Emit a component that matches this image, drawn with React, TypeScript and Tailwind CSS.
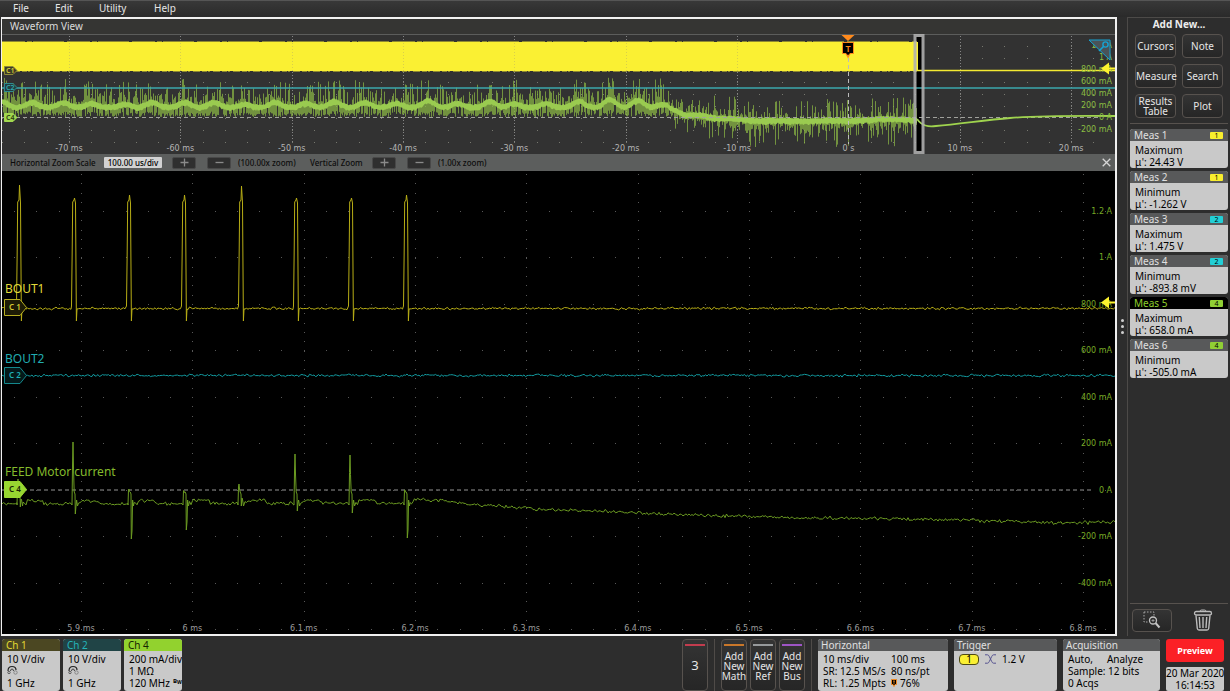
import React from 'react';
import clsx from 'clsx';

type Pt = [number, number];

// Small seeded generator so the traces look the same on every load
const makeRandom = (seed: number) => {
  let s = seed;
  return () => {
    s = (s * 16807) % 2147483647;
    return s / 2147483647;
  };
};

const lerp = (points: Pt[], x: number) => {
  for (let i = 1; i < points.length; i++) {
    const [x0, y0] = points[i - 1];
    const [x1, y1] = points[i];
    if (x <= x1) return y0 + ((y1 - y0) * (x - x0)) / (x1 - x0);
  }
  return points[points.length - 1][1];
};

const toPath = (points: Pt[]) => 'M' + points.map(([x, y]) => `${x.toFixed(1)} ${y.toFixed(1)}`).join('L');

const noisy = (from: number, to: number, amp: number, seed: number, base: (x: number) => number) => {
  const rand = makeRandom(seed);
  const points: Pt[] = [];
  for (let x = from; x <= to; x += 1.5) {
    points.push([x, base(x) + (rand() + rand() - 1) * amp]);
  }
  return points;
};

// Plot coordinate systems
const LEFT = 2;
const WIDTH = 1113;
const OVER = { top: 34, height: 120 };
const MAIN = { top: 171, height: 463 };
const DIV = 111.35;

const overviewTicks = ['-70 ms', '-60 ms', '-50 ms', '-40 ms', '-30 ms', '-20 ms', '-10 ms', '0 s', '10 ms', '20 ms'];
const mainTicks = ['5.9 ms', '6 ms', '6.1 ms', '6.2 ms', '6.3 ms', '6.4 ms', '6.5 ms', '6.6 ms', '6.7 ms', '6.8 ms'];
const overviewAmps = ['1.2 A', '1 A', '800 mA', '600 mA', '400 mA', '200 mA', '0 A', '-200 mA'];
const mainAmps = ['1.2 A', '1 A', '800 mA', '600 mA', '400 mA', '200 mA', '0 A', '-200 mA', '-400 mA'];

const left = (x: number) => `${((x - LEFT) / WIDTH) * 100}%`;

// ---- grids ----
const overviewDots = (() => {
  let d = '';
  for (let y = 45.5; y < 155; y += 12) {
    for (let i = -3; i < 48; i++) d += `M${Math.round(69 + i * (DIV / 5))} ${Math.round(y)}h1`;
  }
  return d;
})();

const mainDots = (() => {
  let d = '';
  for (let k = 0; k < 10; k++) {
    for (let i = -3; i < 47; i++) d += `M${Math.round(81 + i * (DIV / 5))} ${Math.round(211 + k * 46.45)}h1`;
    for (let j = 0; j < 50; j++) d += `M${Math.round(81 + k * DIV)} ${Math.round(174 + j * 9.29)}h1`;
  }
  return d;
})();

// ---- overview traces ----
const ripplePeaks = [2, 32, 63, 92, 125, 152, 185, 214, 245, 275, 306, 334, 365, 396, 428, 457, 490, 514, 546, 579, 610, 638, 662];
const rippleHeights = [6, 5, 5, 4, 3, 5, 5, 5, 3, 5, 4, 6, 5, 4, 7, 4, 6, 4, 4, 6, 8, 7, 3];
const envelope: Pt[] = [[664, 106], [674, 110], [684, 115], [700, 115], [716, 119], [740, 119], [760, 121], [848, 121], [880, 119], [917, 120]];

const ripple = (x: number) => {
  if (x > 668) return lerp(envelope, x) + Math.sin(x / 9) * 0.4;
  let lift = 0;
  ripplePeaks.forEach((p, i) => { lift = Math.max(lift, rippleHeights[i] * Math.exp(-((p - x) ** 2) / 65)); });
  return 107.5 - lift;
};

const currentBand = (() => {
  const rand = makeRandom(77);
  const upper: Pt[] = [];
  const lower: Pt[] = [];
  for (let x = 2; x <= 917; x += 1) {
    upper.push([x, ripple(x) - 2 - rand() * 1.5]);
    lower.push([x, ripple(x) + 2 + rand() * 2]);
  }
  return toPath([...upper, ...lower.reverse()]) + 'Z';
})();

const currentSpikes = (() => {
  const rand = makeRandom(4242);
  let d = '';
  for (let x = 3; x < 917; x += 1) {
    const r = rand();
    const r2 = rand();
    const mid = ripple(x);
    const quiet = x > 672;
    const calm = x > 672 && x < 712;
    if (r > 0.3) {
      const up = quiet ? 3 + r2 * r2 * (calm ? 14 : 20) : 5 + r2 * r2 * 19;
      const peak = !quiet && rand() > 0.9 ? 4 : 0;
      d += `M${x + 0.5} ${mid.toFixed(1)}V${(mid - up - peak).toFixed(1)}`;
    }
    if (r < 0.8) {
      const down = quiet ? 4 + rand() * rand() * (x < 700 ? 18 : 27) : (117 - mid) * (0.6 + rand() * 0.4);
      d += `M${x + 0.5} ${mid.toFixed(1)}V${Math.min(147, mid + down).toFixed(1)}`;
    }
  }
  return d;
})();

// ---- zoomed traces ----
const pulses: Pt[] = [[19, 185], [74, 198], [129, 195], [184, 195], [241, 186], [296, 198], [351, 198], [406, 195]];

const bout1 = (() => {
  const base = noisy(2, 1116, 1.5, 11, () => 308.5).filter(([x]) => !pulses.some(([p]) => x > p - 3 && x < p + 4));
  pulses.forEach(([x, top]) => {
    base.push([x - 2.5, 306], [x - 1.8, 250], [x - 1.3, 202], [x, 200], [x + 0.5, top], [x + 1.5, 203], [x + 1.9, 255], [x + 2.4, 321], [x + 3, 309]);
  });
  return toPath(base.sort((a, b) => a[0] - b[0]));
})();

const bout2 = toPath(noisy(2, 1116, 1.6, 29, () => 375.5));

const motorBase: Pt[] = [[2, 503], [415, 502], [440, 501], [480, 505], [520, 508], [560, 510], [600, 511], [640, 513], [720, 516], [820, 518], [900, 519], [1000, 521], [1050, 523], [1116, 522]];
const motorKicks: [number, number, number][] = [
  [18, 479, 507], [73, 442, 514], [129, 489, 539], [184, 491, 530], [239, 484, 506], [295, 454, 511], [350, 455, 513], [405, 490, 538],
];

const motor = (() => {
  const bump = (x: number) => {
    if (x > 430) return 0;
    return motorKicks.some(([k]) => x > k + 8 && x < k + 26) ? -2 : 1;
  };
  const base = noisy(2, 1116, 2.2, 53, x => lerp(motorBase, x) + bump(x))
    .filter(([x]) => !motorKicks.some(([k]) => x > k - 1 && x < k + 5));
  motorKicks.forEach(([x, up, down]) => {
    base.push([x - 1, 505], [x - 0.5, (up + 490) / 2], [x, up], [x + 0.5, (up + 494) / 2], [x + 1.2, 492], [x + 2, 494], [x + 2.3, down], [x + 3, down - 8], [x + 3.6, 500], [x + 4.5, 506]);
  });
  return toPath(base.sort((a, b) => a[0] - b[0]));
})();

const axisText = "absolute font-['DejaVu_Sans'] text-[8px] leading-[10px] whitespace-nowrap";

const ChannelTag: React.FC<{ y: number; name: string; stroke: string; fill: string; text: string; small?: boolean }> = ({ y, name, stroke, fill, text, small }) => (
  <svg
    className={clsx('absolute', small ? 'left-[2px] h-[9px] w-[14px]' : 'left-[2px] h-[17px] w-[24px]')}
    style={{ top: y }}
    viewBox={small ? '0 0 14 9' : '0 0 24 17'}
  >
    <path d={small ? 'M.5 .5H9L13 4.5L9 8.5H.5Z' : 'M.5 .5H16L22.5 8.5L16 16.5H.5Z'} fill={fill} stroke={stroke} />
    <text x={small ? 2 : 5} y={small ? 7 : 11} fill={text} fontFamily="Noto Sans" fontWeight="600" fontSize={small ? 7 : 8}>{name}</text>
  </svg>
);

const LevelArrow: React.FC<{ top: number }> = ({ top }) => (
  <svg className="absolute right-0 h-[13px] w-[14px]" style={{ top }} viewBox="0 0 14 13">
    <path d="M0 6.500L8 .5V12.500Z" fill="#fdf32e" />
    <path d="M7 6.500H14" stroke="#fdf32e" strokeWidth="2" />
  </svg>
);

const Overview = () => (
  <div className="relative h-[120px] shrink-0 overflow-hidden bg-[#323232]">
    {/* dark backing of the zoom window, under the traces */}
    <div className="absolute inset-y-0 w-[10px] -translate-x-1/2 bg-black" style={{ left: left(919) }} />
    <svg className="relative block h-full w-full" viewBox={`${LEFT} ${OVER.top} ${WIDTH} ${OVER.height}`} preserveAspectRatio="none">
      <path d="M2 34.500H1115" stroke="#5c5d5c" />
      <path d={overviewDots} stroke="#77786f" transform="translate(0 .5)" />
      {overviewTicks.map((t, i) => t !== '0 s' && (
        <path key={t} d={`M${Math.round(69 + i * DIV) + 0.5} 36V144`} stroke="#858585" strokeDasharray="1 2" />
      ))}
      <rect x="2" y="42" width="916" height="29" fill="#faf033" />
      <path d="M2 41.500H917" stroke="#8f8a32" strokeDasharray="23 2 5 1 31 3" />
      <path d="M2 71.500H917" stroke="#8f8a32" strokeDasharray="5 1 2 3 7 2" />
      {overviewTicks.slice(0, 7).map((t, i) => (
        <path key={t} d={`M${Math.round(69 + i * DIV) + 0.5} 43V71`} stroke="#d9cf4a" strokeDasharray="1 2" />
      ))}
      <path d="M917 70.500H1116" stroke="#f4ea32" strokeWidth="1.400" />
      <path d={currentSpikes} stroke="#8dbb45" strokeOpacity=".7" />
      <path d="M2 88H1116" stroke="#3ba9ae" strokeWidth="1.600" />
      <path d={currentBand} fill="#9acb50" />
      <path d="M848.500 58V144" stroke="#bbb" strokeDasharray="4 3" />
      <path d="M2 117.500H1098" stroke="#a0a19c" strokeDasharray="4 3" />
      <path d="M917 119C922 126 928 127 936 126C960 124 985 120 1010 118C1035 116 1060 115.500 1116 116" fill="none" stroke="#9fd34e" strokeWidth="1.800" />
    </svg>
    {overviewTicks.map((t, i) => (
      <span key={t} className={clsx(axisText, 'bottom-0 -translate-x-1/2 text-[#b4b4b4]')} style={{ left: left(69 + i * DIV) }}>{t}</span>
    ))}
    {overviewAmps.map((t, i) => (
      <span key={t} className={clsx(axisText, 'right-[3px] text-[#8bbd42]')} style={{ top: 7 + i * 12 }}>{t}</span>
    ))}
    <ChannelTag small y={32} name="C1" stroke="#8d8937" fill="#3d3c26" text="#d8cf3a" />
    <ChannelTag small y={49} name="C2" stroke="#2c8b90" fill="#233f41" text="#30aab0" />
    <ChannelTag small y={79} name="C4" stroke="#a2d84f" fill="#a2d84f" text="#2c3a14" />

    {/* trigger position */}
    <svg className="absolute top-px h-[25px] w-[14px] -translate-x-1/2" style={{ left: left(848) }} viewBox="0 0 14 25">
      <path d="M.5 0H13.500L7 6Z" fill="#ff8a1c" />
      <path d="M4.500 19H9.500L7 23.500Z" fill="#ff8a1c" />
      <path d="M1.500 7.500H12.500V18.500H9L7 21L5 18.500H1.500Z" fill="#000" stroke="#ff8a1c" />
      <text x="7" y="16.500" textAnchor="middle" fill="#ff8a1c" fontFamily="Noto Sans" fontWeight="600" fontSize="9">T</text>
    </svg>

    {/* zoom window */}
    <div className="absolute inset-y-0 w-[11px] -translate-x-1/2 border-[3px] border-[#b0b0b0]/90" style={{ left: left(919) }} />

    <svg className="absolute top-[5px] right-[4px] h-[22px] w-[23px]" viewBox="0 0 23 22">
      <path d="M1 1H22V21Z" fill="#4a5358" stroke="#15a4d4" />
      <circle cx="17.500" cy="5.500" r="2.600" fill="none" stroke="#15a4d4" strokeWidth="1.400" />
      <path d="M15.500 7.500L11 12" stroke="#15a4d4" strokeWidth="1.600" />
    </svg>
    <LevelArrow top={28} />
  </div>
);

const ZoomStep: React.FC<{ label: string; sign: '+' | '-' }> = ({ label, sign }) => (
  <button aria-label={label} className="flex h-[12px] w-[24px] items-center justify-center rounded-[2px] border border-[#484848] bg-[#2f2f2f]">
    <svg className="h-[9px] w-[9px]" viewBox="0 0 9 9">
      <path d={sign === '+' ? 'M.5 4.500H8.500M4.500 .5V8.500' : 'M.5 4.500H8.500'} stroke="#8a8a8a" strokeWidth="1.300" />
    </svg>
  </button>
);

const ZoomBar = () => (
  <div className="flex h-[17px] shrink-0 items-center bg-[#5c5e5d] pr-[3px] pl-2 text-[8px] leading-[12px] font-medium whitespace-nowrap text-[#0c0c0c]">
    <label htmlFor="hscale" className="w-[88px]">Horizontal Zoom Scale</label>
    <input id="hscale" defaultValue="100.00 us/div" className="ml-[6px] h-[11px] w-[58px] rounded-[1px] bg-[#d2d2d2] text-center text-black" />
    <div className="ml-[10px] flex gap-[11px]">
      <ZoomStep label="Increase horizontal zoom" sign="+" />
      <ZoomStep label="Decrease horizontal zoom" sign="-" />
    </div>
    <span className="ml-[7px] w-[72px]">(100.00x zoom)</span>
    <span className="w-[54px]">Vertical Zoom</span>
    <div className="ml-[8px] flex gap-[11px]">
      <ZoomStep label="Increase vertical zoom" sign="+" />
      <ZoomStep label="Decrease vertical zoom" sign="-" />
    </div>
    <span className="ml-[7px]">(1.00x zoom)</span>
    <button aria-label="Close zoom" className="ml-auto flex h-[12px] w-[12px] items-center justify-center">
      <svg className="h-[9px] w-[9px]" viewBox="0 0 9 9">
        <path d="M.7 .7L8.300 8.300M8.300 .7L.7 8.300" stroke="#d6d6d6" strokeWidth="1.300" />
      </svg>
    </button>
  </div>
);

const ZoomPlot = () => (
  <div className="relative min-h-[463px] flex-1 overflow-hidden bg-black">
    <svg className="absolute inset-0 h-full w-full" viewBox={`${LEFT} ${MAIN.top} ${WIDTH} ${MAIN.height}`} preserveAspectRatio="none">
      <path d={mainDots} stroke="#585858" transform="translate(0 .5)" />
      <path d="M2 490H1094" stroke="#636363" strokeWidth="1.400" strokeDasharray="4 3" />
      <path d={bout1} fill="none" stroke="#b8ae16" strokeLinejoin="round" />
      <path d={bout2} fill="none" stroke="#129a9f" />
      <path d={motor} fill="none" stroke="#6c9c22" />
    </svg>
    {mainTicks.map((t, i) => (
      <span key={t} className={clsx(axisText, 'bottom-0 -translate-x-1/2 text-[#9c9c9c]')} style={{ left: left(81 + i * DIV) }}>{t}</span>
    ))}
    {mainAmps.map((t, i) => (
      <span key={t} className={clsx(axisText, 'right-[3px] text-[#76a825]')} style={{ top: `${((36 + i * 46.45) / MAIN.height) * 100}%` }}>{t}</span>
    ))}
    <span className="absolute top-[110px] left-[3px] text-[12px] leading-[16px] text-[#e3da3a]">BOUT1</span>
    <span className="absolute top-[180px] left-[3px] text-[12px] leading-[16px] text-[#21acb1]">BOUT2</span>
    <span className="absolute top-[293px] left-[3px] text-[12px] leading-[16px] text-[#84ba2c]">FEED Motor current</span>
    <ChannelTag y={128} name="C 1" stroke="#b8ae22" fill="#1d1b06" text="#d4ca34" />
    <ChannelTag y={196} name="C 2" stroke="#14888d" fill="#04191a" text="#1fb0b5" />
    <ChannelTag y={310} name="C 4" stroke="#98d631" fill="#98d631" text="#1a2606" />
    <LevelArrow top={125} />
  </div>
);

const channelColor = { 1: 'bg-[#f9ee2e]', 2: 'bg-[#22cfd6]', 4: 'bg-[#90cf35]' };

const measurements: { name: string; kind: string; value: string; ch: 1 | 2 | 4; active?: boolean }[] = [
  { name: 'Meas 1', kind: 'Maximum', value: '24.43 V', ch: 1 },
  { name: 'Meas 2', kind: 'Minimum', value: '-1.262 V', ch: 1 },
  { name: 'Meas 3', kind: 'Maximum', value: '1.475 V', ch: 2 },
  { name: 'Meas 4', kind: 'Minimum', value: '-893.8 mV', ch: 2 },
  { name: 'Meas 5', kind: 'Maximum', value: '658.0 mA', ch: 4, active: true },
  { name: 'Meas 6', kind: 'Minimum', value: '-505.0 mA', ch: 4 },
];

const darkButton = 'rounded-[4px] border border-[#57524e] bg-linear-to-b from-[#343434] to-[#262626] text-[#e6e6e6]';

const Sidebar = () => (
  <aside className="flex w-[103px] shrink-0 flex-col border-t border-l border-[#4c4a48] px-[2px] text-[10px]">
    <h2 className="text-center leading-[12px] font-bold text-[#ececec]">Add New...</h2>
    <div className="mx-[5px] mt-[4px] grid grid-cols-2 gap-[6px] leading-[10px]">
      {['Cursors', 'Note', 'Measure', 'Search', 'Results Table', 'Plot'].map(name => (
        <button key={name} className={clsx(darkButton, 'h-[24px]')}>{name}</button>
      ))}
    </div>
    <hr className="mt-[5px] border-[#57524e]" />
    <div className="mt-[5px] flex flex-col gap-[3px]">
      {measurements.map(m => (
        <section key={m.name} className="h-[39px] overflow-hidden rounded-[3px] bg-[#c9c9c9] text-black">
          <header className={clsx('flex h-[12px] items-center justify-between pr-[5px] pl-[4px] leading-[12px]', m.active ? 'bg-black text-[#8fd02c]' : 'bg-[#58595a] text-[#e0e0e0]')}>
            <span>{m.name}</span>
            <span className={clsx('h-[7px] w-[13px] rounded-[1px] text-center text-[7px] leading-[7px] text-black', channelColor[m.ch])}>{m.ch}</span>
          </header>
          <div className="pt-[3px] pl-[5px] leading-[12px]">
            <p>{m.kind}</p>
            <p>μ': {m.value}</p>
          </div>
        </section>
      ))}
    </div>
    <div className="mt-auto flex h-[33px] items-center justify-between border-t border-[#57524e] pr-[15px] pl-[2px]">
      <button aria-label="Zoom to area" className={clsx(darkButton, 'flex h-[23px] w-[40px] items-center justify-center')}>
        <svg className="h-[18px] w-[18px]" viewBox="0 0 18 18" fill="none">
          <path d="M1 1H11V6M1 1V11H6" stroke="#a8a8a8" strokeDasharray="1.500 1.500" />
          <circle cx="10" cy="9.500" r="3.500" stroke="#c4c4c4" strokeWidth="1.300" />
          <path d="M8.500 9.500H11.500M10 8V11" stroke="#a8a8a8" strokeWidth=".8" />
          <path d="M12.500 12L16.500 16.500" stroke="#c4c4c4" strokeWidth="2" />
        </svg>
      </button>
      <button aria-label="Delete" className="h-[22px] w-[20px]">
        <svg className="h-full w-full" viewBox="0 0 20 22" fill="none" stroke="#bcbcbc">
          <path d="M7 2.500Q7 1 8.500 1H11.500Q13 1 13 2.500" />
          <rect x="1.500" y="2.500" width="17" height="3.500" rx="1.700" strokeWidth="1.300" />
          <path d="M3 6.500L4.300 19.500Q4.500 21 6 21H14Q15.500 21 15.700 19.500L17 6.500" strokeWidth="1.400" />
          <path d="M6.300 8L7 19M10 8V19M13.700 8L13 19" strokeWidth="1.400" />
        </svg>
      </button>
    </div>
  </aside>
);

const ProbeIcon = () => (
  <svg className="h-[10px] w-[12px]" viewBox="0 0 12 10" fill="none">
    <path d="M1 6Q1 1.500 5 1.500Q9 1.500 9 5" stroke="#222" strokeWidth="1.200" />
    <path d="M3.500 6Q3.500 4 5 4Q6.500 4 6.500 6" stroke="#444" />
    <circle cx="2" cy="7.500" r="1.200" stroke="#444" strokeWidth=".8" />
    <circle cx="8.500" cy="7.500" r="1.700" stroke="#777" strokeWidth=".8" />
  </svg>
);

const channels = [
  { name: 'Ch 1', scale: '10 V/div', bandwidth: '1 GHz', head: 'bg-[#4b4722] text-[#e2d932]' },
  { name: 'Ch 2', scale: '10 V/div', bandwidth: '1 GHz', head: 'bg-[#204446] text-[#25b4ba]' },
  { name: 'Ch 4', scale: '200 mA/div', impedance: '1 MΩ', bandwidth: '120 MHz', head: 'bg-[#92d22e] text-[#172400]' },
];

const addButtons = [
  { name: 'Math', bar: 'bg-[#c9772a]' },
  { name: 'Ref', bar: 'bg-[#96999b]' },
  { name: 'Bus', bar: 'bg-[#9d55c4]' },
];

const Panel: React.FC<{ title: string; className: string; children: React.ReactNode }> = ({ title, className, children }) => (
  <section className={clsx('h-[52px] overflow-hidden rounded-[3px] bg-[#c9c9c9] text-black', className)}>
    <header className="h-[12px] bg-[#58595a] pl-[3px] leading-[12px] text-[#e0e0e0]">{title}</header>
    {children}
  </section>
);

const Footer = () => (
  <footer className="flex shrink-0 items-start pt-[3px] pr-[6px] pl-[2px] text-[10px] leading-[12px]">
    <div className="flex gap-[3px]">
      {channels.map(c => (
        <section key={c.name} className="h-[52px] w-[58px] overflow-hidden rounded-[3px] bg-[#c9c9c9] text-black">
          <header className={clsx('h-[12px] pl-[4px]', c.head)}>{c.name}</header>
          <div className="pt-[2px] pl-[5px] whitespace-nowrap">
            <p>{c.scale}</p>
            <div className="h-[12px]">{c.impedance ?? <ProbeIcon />}</div>
            <p className="flex gap-[3px]">
              {c.bandwidth}
              {c.impedance && (
                <span className="text-[6px] leading-[8px] font-bold">B<sub className="text-[5px]">W</sub></span>
              )}
            </p>
          </div>
        </section>
      ))}
    </div>

    <div className="ml-auto flex h-[52px] items-stretch text-center">
      <button className={clsx(darkButton, 'relative w-[26px] text-[13px]')}>
        <span className="absolute inset-x-[2px] top-[4px] h-[2px] bg-[#c23c4e]" />
        3
      </button>
      <div className="mx-[6px] w-px bg-[#4f4b48]" />
      <div className="flex gap-[3px]">
        {addButtons.map(b => (
          <button key={b.name} className={clsx(darkButton, 'flex w-[26px] flex-col items-center pt-[4px] leading-[10px]')}>
            <span className={clsx('mb-[5px] h-[2px] w-[20px] shrink-0', b.bar)} />
            <span>Add<br />New<br />{b.name}</span>
          </button>
        ))}
      </div>
      <div className="mx-[6px] w-px bg-[#4f4b48]" />
    </div>

    <div className="flex gap-[6px]">
      <Panel title="Horizontal" className="w-[130px]">
        <div className="grid grid-cols-[68px_1fr] pt-[2px] pl-[5px] whitespace-nowrap">
          <span>10 ms/div</span><span>100 ms</span>
          <span>SR: 12.5 MS/s</span><span>80 ns/pt</span>
          <span>RL: 1.25 Mpts</span>
          <span className="flex items-center gap-[3px]">
            <svg className="h-[8px] w-[6px]" viewBox="0 0 6 8">
              <path d="M.5 .5H5.500V5.500H4L3 7.500L2 5.500H.5Z" fill="#000" stroke="#ee8a24" />
              <path d="M2 2H4M3 2V5" stroke="#ee8a24" strokeWidth=".8" />
            </svg>
            76%
          </span>
        </div>
      </Panel>
      <Panel title="Trigger" className="w-[103px]">
        <div className="flex items-center pt-[2px] pl-[5px]">
          <span className="h-[11px] w-[20px] rounded-[4px] border border-[#4d4a14] bg-[#faf033] text-center leading-[9px]">1</span>
          <svg className="ml-[6px] h-[10px] w-[11px]" viewBox="0 0 11 10" fill="none" stroke="#565390">
            <path d="M0 .8H2.500Q3.500 .8 4.300 2.500L6.700 7.500Q7.500 9.200 8.500 9.200H11" />
            <path d="M0 9.200H2.500Q3.500 9.200 4.300 7.500L6.700 2.500Q7.500 .8 8.500 .8H11" />
          </svg>
          <span className="ml-[6px]">1.2 V</span>
        </div>
      </Panel>
      <Panel title="Acquisition" className="w-[97px]">
        <div className="pt-[2px] pl-[5px]">
          <p className="flex gap-[14px]"><span>Auto,</span><span>Analyze</span></p>
          <p>Sample: 12 bits</p>
          <p>0 Acqs</p>
        </div>
      </Panel>
      <div className="flex h-[52px] w-[58px] flex-col justify-between">
        <button className="h-[23px] rounded-[3px] bg-[#fb2026] text-[9px] font-bold text-white">Preview</button>
        <time className="h-[24px] rounded-[2px] bg-[#c9c9c9] text-center leading-[12px] whitespace-nowrap text-black">20 Mar 2020<br />16:14:53</time>
      </div>
    </div>
  </footer>
);

const App = () => (
  <div className="flex min-h-screen flex-col bg-[#2d2d2d] font-['Noto_Sans',sans-serif] text-[#e6e6e6]">
    <nav className="flex h-[17px] shrink-0 items-start border-t border-[#555] bg-linear-to-b from-[#383838] to-[#2a2a2a] pl-[13px] text-[10px] leading-[14px]">
      <button className="w-[42px] text-left">File</button>
      <button className="w-[44px] text-left">Edit</button>
      <button className="w-[55px] text-left">Utility</button>
      <button className="w-[42px] text-left">Help</button>
    </nav>

    <div className="flex flex-1 pl-px">
      <main className="flex min-w-0 flex-1 flex-col border-2 border-l border-[#f0f0f0]">
        <h1 className="h-[15px] shrink-0 bg-[#353533] pl-[8px] text-[10px] leading-[15px] text-[#dcdcdc]">Waveform View</h1>
        <Overview />
        <ZoomBar />
        <ZoomPlot />
      </main>
      <button aria-label="Toggle results bar" className="flex w-[10px] flex-col items-center justify-center gap-[3px]">
        <span className="h-[3px] w-[3px] rounded-full bg-[#cfcfcf]" />
        <span className="h-[3px] w-[3px] rounded-full bg-[#cfcfcf]" />
        <span className="h-[3px] w-[3px] rounded-full bg-[#cfcfcf]" />
      </button>
      <Sidebar />
    </div>

    <Footer />
  </div>
);

export default App;
